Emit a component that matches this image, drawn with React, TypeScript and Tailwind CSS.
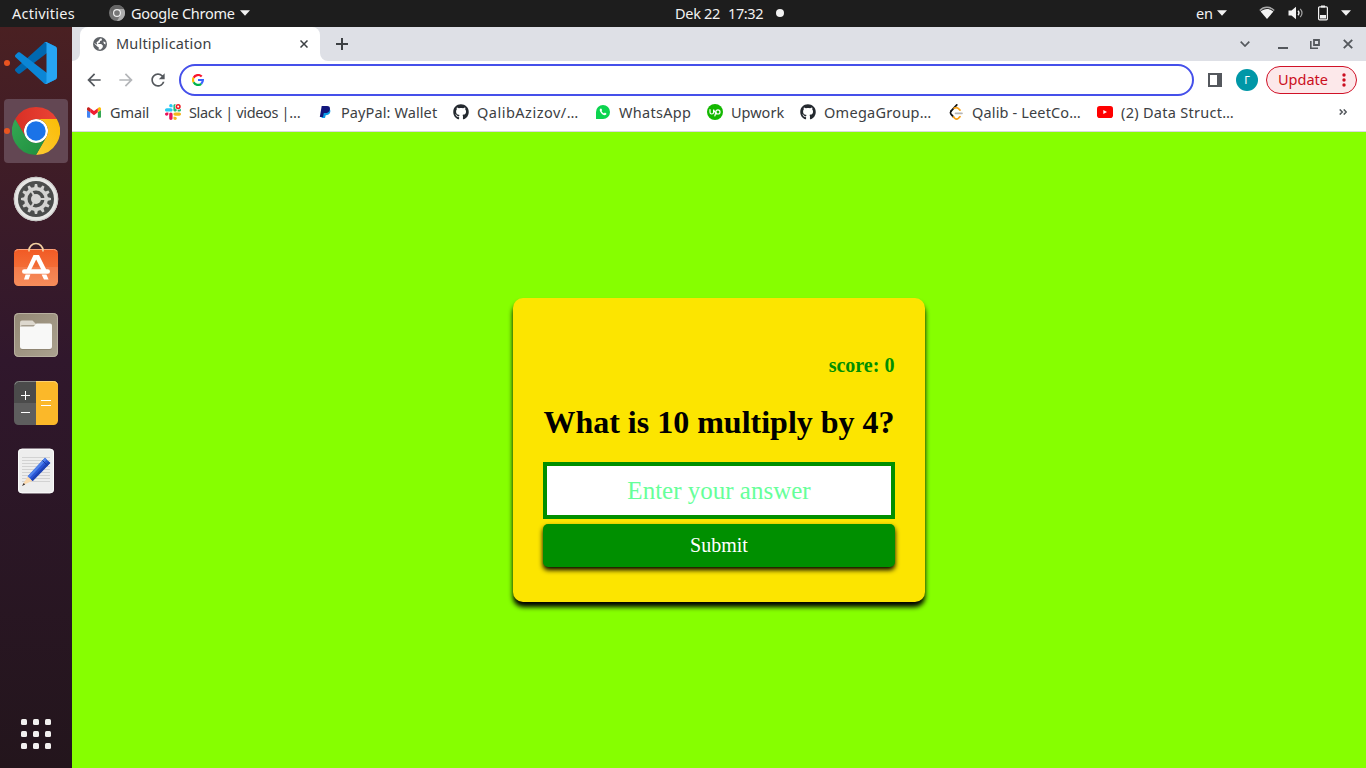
import React from "react";
import { MdArrowBack, MdArrowForward, MdRefresh } from "react-icons/md";
import { FaGithub } from "react-icons/fa";

/* ---------- Desktop top bar ---------- */

function Caret({ className = "" }: { className?: string }) {
  return (
    <svg width="10" height="6" viewBox="0 0 10 6" className={className}>
      <path d="M0 0.3h10L5 5.8z" fill="#f2f2f2" />
    </svg>
  );
}

function GrayChrome() {
  return (
    <svg width="16" height="16" viewBox="0 0 48 48">
      <circle cx="24" cy="24" r="24" fill="#747474" />
      <path d="M24 12H44.8A24 24 0 0 0 3.2 12L13.6 30A12 12 0 0 1 24 12Z" fill="#666" />
      <path d="M34.4 30L24 48A24 24 0 0 0 44.8 12H24A12 12 0 0 1 34.4 30Z" fill="#acacac" />
      <circle cx="24" cy="24" r="12" fill="#f0f0f0" />
      <circle cx="24" cy="24" r="8.5" fill="#777" />
    </svg>
  );
}

function TopBar() {
  return (
    <header className="grid h-[27px] shrink-0 grid-cols-[675px_1fr_170px] items-center bg-[#1d1d1d] pb-px text-[#f2f2f2]">
      <div className="flex items-center">
        <span className="ml-3 w-[97px] tracking-[0.26px]">Activities</span>
        <GrayChrome />
        <span className="ml-[6px] w-[109px] tracking-[-0.25px]">Google Chrome</span>
        <Caret />
      </div>
      <div className="flex items-center">
        <span className="w-[53px] tracking-[-0.3px]">Dek 22</span>
        <span className="w-[48px] tracking-[-0.4px]">17:32</span>
        <span className="size-2 rounded-full bg-[#f2f2f2]" />
      </div>
      <div className="flex items-center">
        <span className="w-[21px] tracking-[-0.3px]">en</span>
        <Caret />
        <svg width="16" height="14" viewBox="0 0 16 14" className="ml-[32px]">
          <path d="M0.8 4.4C4.8 0.2 11.2 0.2 15.2 4.4" fill="none" stroke="#a8a8a8" strokeWidth="1.5" />
          <path d="M1.6 5.6C5.2 2 10.8 2 14.4 5.6L8 13z" fill="#f2f2f2" />
        </svg>
        <svg width="16" height="14" viewBox="0 0 16 14" className="ml-[13px]">
          <path d="M0.5 4.5h3L8 0.8v12.4L3.5 9.5h-3z" fill="#f2f2f2" />
          <path d="M10 4.8c1.2 1.3 1.2 3.1 0 4.4" fill="none" stroke="#f2f2f2" strokeWidth="1.3" />
          <path d="M12.2 2.8c2.4 2.4 2.4 6 0 8.4" fill="none" stroke="#a8a8a8" strokeWidth="1.2" />
        </svg>
        <svg width="10" height="16" viewBox="0 0 10 16" className="ml-[14px]">
          <path d="M3 0.5h4v2H3z" fill="#f2f2f2" />
          <rect x="0.6" y="1.8" width="8.8" height="13" rx="1" fill="none" stroke="#f2f2f2" strokeWidth="1.2" />
          <path d="M2 10h6v3.5H2z" fill="#f2f2f2" />
        </svg>
        <Caret className="ml-[13px]" />
      </div>
    </header>
  );
}

/* ---------- Dock ---------- */

function VSCodeIcon() {
  return (
    <svg width="42" height="42" viewBox="0 0 100 100">
      <path d="M96.4614 10.7962L75.8569 0.875542C73.4719 -0.272773 70.6217 0.211611 68.75 2.08333L1.29858 63.5832C-0.515693 65.2373 -0.513607 68.0937 1.30308 69.7452L6.81272 74.754C8.29793 76.1042 10.5347 76.2036 12.1338 74.9905L93.3609 13.3699C96.086 11.3026 100 13.2462 100 16.6667V16.4275C100 14.0265 98.6246 11.8378 96.4614 10.7962Z" fill="#0068b0" />
      <path d="M96.4614 89.2038L75.8569 99.1245C73.4719 100.273 70.6217 99.7884 68.75 97.9167L1.29858 36.4169C-0.515693 34.7627 -0.513607 31.9063 1.30308 30.2548L6.81272 25.246C8.29793 23.8958 10.5347 23.7964 12.1338 25.0095L93.3609 86.6301C96.086 88.6974 100 86.7538 100 83.3334V83.5726C100 85.9735 98.6246 88.1622 96.4614 89.2038Z" fill="#0b86d6" />
      <path d="M75.8578 99.1263C73.4721 100.274 70.6219 99.7885 68.75 97.9166C71.0564 100.223 75 98.5895 75 95.3278V4.67213C75 1.41039 71.0564 -0.223106 68.75 2.08329C70.6219 0.211402 73.4721 -0.273666 75.8578 0.873633L96.4587 10.7807C98.6234 11.8217 100 14.0112 100 16.4132V83.5871C100 85.9891 98.6234 88.1786 96.4586 89.2196L75.8578 99.1263Z" fill="#27a5f3" />
    </svg>
  );
}

function ChromeIcon() {
  return (
    <svg width="48" height="48" viewBox="0 0 48 48">
      <defs>
        <linearGradient id="cr" x1="0" y1="0" x2="1" y2="0"><stop offset="0" stopColor="#d93025" /><stop offset="1" stopColor="#ea4335" /></linearGradient>
        <linearGradient id="cy" x1="0" y1="1" x2="1" y2="0"><stop offset="0" stopColor="#fcc934" /><stop offset="1" stopColor="#fbbc04" /></linearGradient>
        <linearGradient id="cg" x1="1" y1="1" x2="0" y2="0"><stop offset="0" stopColor="#1e8e3e" /><stop offset="1" stopColor="#34a853" /></linearGradient>
      </defs>
      <circle cx="24" cy="24" r="12" fill="#fff" />
      <path d="M24,12H44.7812a23.9939,23.9939,0,0,0-41.5639.0029L13.6079,30l.0093-.0024A11.9852,11.9852,0,0,1,24,12Z" fill="url(#cr)" />
      <path d="M34.3913,30.0029,24.0007,48A23.994,23.994,0,0,0,44.78,12.0031H23.9989l-.0025.0093A11.985,11.985,0,0,1,34.3913,30.0029Z" fill="url(#cy)" />
      <path d="M13.6086,30.0031,3.218,12.006A23.994,23.994,0,0,0,24.0025,48L34.3931,30.0029l-.0067-.0068a11.9852,11.9852,0,0,1-20.7778.007Z" fill="url(#cg)" />
      <circle cx="24" cy="24" r="9.7" fill="#1a73e8" />
    </svg>
  );
}

const TEETH = [0, 30, 60, 90, 120, 150, 180, 210, 240, 270, 300, 330];

function SettingsIcon() {
  return (
    <svg width="46" height="46" viewBox="0 0 46 46">
      <circle cx="23" cy="23" r="22.3" fill="#e6e6e4" />
      <circle cx="23" cy="23" r="21.7" fill="none" stroke="#c6c6c4" strokeWidth="1" />
      <circle cx="23" cy="23" r="18" fill="#4b4d4c" />
      <g fill="#d2d2d0">
        {TEETH.map((a) => (
          <path key={a} d="M21 12l0.900-4h2.200l0.900 4z" transform={`rotate(${a} 23 23)`} />
        ))}
      </g>
      <circle cx="23" cy="23" r="10.2" fill="none" stroke="#d2d2d0" strokeWidth="3.4" />
      <g stroke="#d2d2d0" strokeWidth="2">
        <path d="M23 23L32 23M23 23L18.500 15.200M23 23L18.500 30.800" />
      </g>
      <circle cx="23" cy="23" r="5" fill="#d6d6d4" />
    </svg>
  );
}

function SoftwareIcon() {
  return (
    <svg width="46" height="46" viewBox="0 0 46 46" className="mb-[6px]">
      <defs>
        <linearGradient id="sw" x1="0" y1="0" x2="0" y2="1"><stop offset="0" stopColor="#f15a24" /><stop offset="1" stopColor="#f58049" /></linearGradient>
      </defs>
      <rect x="1" y="8" width="44" height="37" rx="4.5" fill="url(#sw)" />
      <path d="M1 26h44v14.500a4.500 4.500 0 0 1-4.500 4.500h-35a4.500 4.500 0 0 1-4.500-4.500z" fill="#fff" opacity="0.1" />
      <path d="M2 10.500a3.500 3.500 0 0 1 3.500-2h35a3.500 3.500 0 0 1 3.500 2" fill="none" stroke="#f9a27c" strokeWidth="1" />
      <path d="M16 10.500V9.500a7 7 0 0 1 14 0v1" fill="none" stroke="#f3d0a2" strokeWidth="1.7" />
      <path d="M20.500 14h5.500l7.500 15h-5L23.200 18.500 18 29h-4.500z" fill="#fff" />
      <path d="M12.600 33.500h4.800l-1.800 5h-4.600zM28.600 33.500h4.800l2.200 5H31z" fill="#fff" />
      <rect x="9" y="28.2" width="28" height="4.6" rx="2.3" fill="#fff" />
    </svg>
  );
}

function FilesIcon() {
  return (
    <svg width="46" height="46" viewBox="0 0 46 46">
      <defs>
        <linearGradient id="fl" x1="0" y1="0" x2="1" y2="1"><stop offset="0" stopColor="#938875" /><stop offset="1" stopColor="#aba28f" /></linearGradient>
      </defs>
      <rect x="1" y="1" width="44" height="44" rx="4.5" fill="url(#fl)" />
      <rect x="1.5" y="1.5" width="43" height="43" rx="4" fill="none" stroke="#b8b0a0" />
      <path d="M7 15v-4.500a2 2 0 0 1 2-2h10.500l3.500 3.500v3z" fill="#ddd8ce" />
      <rect x="7" y="13" width="32" height="25" rx="2.5" fill="#827866" opacity="0.6" />
      <path d="M7 14.500h13.500l3-3H37a2 2 0 0 1 2 2V34.500a2.500 2.500 0 0 1-2.500 2.500h-27A2.500 2.500 0 0 1 7 34.500z" fill="#f8f8f7" />
    </svg>
  );
}

function CalculatorIcon() {
  return (
    <svg width="46" height="46" viewBox="0 0 46 46">
      <path d="M5.500 1H23v22H1V5.500A4.500 4.500 0 0 1 5.500 1z" fill="#4b4b4b" />
      <path d="M1 23h22v22H5.500A4.500 4.500 0 0 1 1 40.500z" fill="#5e5e5e" />
      <path d="M23 1h17.500A4.500 4.500 0 0 1 45 5.500v35a4.500 4.500 0 0 1-4.500 4.500H23z" fill="#fbb829" />
      <path d="M2 4.500A4 4 0 0 1 5.500 1.500H23" fill="none" stroke="#858585" />
      <path d="M23 1.500h17.500a4 4 0 0 1 4 3" fill="none" stroke="#fdd16f" />
      <path d="M8 15.500h9M12.500 11v9M8 32.500h9M28 20.500h10M28 25.500h10" stroke="#fff" strokeWidth="1" />
    </svg>
  );
}

function EditorIcon() {
  return (
    <svg width="46" height="46" viewBox="0 0 46 46">
      <rect x="5" y="0.7" width="36" height="44.6" rx="4" fill="#ededed" />
      <rect x="5.5" y="1.2" width="35" height="43.6" rx="3.5" fill="none" stroke="#fafafa" />
      <path d="M9 9.500h28M9 12.500h28M9 15.500h28M9 18.500h28M9 21.500h28M9 24.500h28M9 27.500h28M9 30.500h28M9 33.500h28" stroke="#d2d2d2" strokeWidth="1" />
      <path d="M14.700 28.500L9.200 37.500 19.500 32.800z" fill="#fbd9ae" />
      <path d="M10.700 34.900L9 38l3.200-1.500z" fill="#3d3430" />
      <path d="M14.700 28.300L32 9.700l5.300 5.300L19.700 33z" fill="#2a56d6" />
      <path d="M14.700 28.300L32 9.700l1.800 1.800L16.400 30z" fill="#5082ea" />
      <path d="M18 31.500L35.500 13.200l1.800 1.800L19.700 33z" fill="#1d42b4" />
      <path d="M29.500 12.500l5 5" stroke="#1b3c9e" strokeWidth="1" />
    </svg>
  );
}

const dockItems = [
  { name: "code", icon: <VSCodeIcon />, running: true, active: false },
  { name: "chrome", icon: <ChromeIcon />, running: true, active: true },
  { name: "settings", icon: <SettingsIcon />, running: false, active: false },
  { name: "software", icon: <SoftwareIcon />, running: false, active: false },
  { name: "files", icon: <FilesIcon />, running: false, active: false },
  { name: "calculator", icon: <CalculatorIcon />, running: false, active: false },
  { name: "editor", icon: <EditorIcon />, running: false, active: false },
];

function Dock() {
  return (
    <nav className="flex w-[72px] shrink-0 flex-col items-center gap-1 bg-linear-to-b from-[#4a2022] via-[#30172c] via-45% to-[#23151c] pt-1">
      {dockItems.map((item) => (
        <div
          key={item.name}
          className={
            "relative flex size-16 items-center justify-center rounded-[4px] " + (item.active ? "bg-[#634753]" : "")
          }
        >
          {item.running && <span className="absolute top-[29px] left-0 size-[6px] rounded-full bg-[#e95420]" />}
          {item.icon}
        </div>
      ))}
      <div className="mt-auto mb-[19px] grid grid-cols-3 gap-[6px]">
        {TEETH.slice(0, 9).map((n) => (
          <span key={n} className="size-[6px] rounded-[1.5px] bg-[#f2f0ef]" />
        ))}
      </div>
    </nav>
  );
}

/* ---------- Browser chrome ---------- */

function Globe() {
  return (
    <svg width="14" height="14" viewBox="0 0 14 14">
      <circle cx="7" cy="7" r="7" fill="#5f6368" />
      <path d="M7.200 1.500L9 1.700 8.700 3.500 7 4 7 5.500 5.200 6.100 5.500 7H8.300L9.300 8.200 10 8.500 9.600 10.500 7.800 12.500 5.600 12.600 5.800 10.400 4.300 9.500 1.500 6.800 1.600 6 3.400 7.500 4.300 7.200 3.500 5.200 5.300 4z" fill="#fff" />
      <path d="M10.200 4.500l2.100 0.400 0.300 2.600-1.600-0.800z" fill="#fff" />
    </svg>
  );
}

function TabStrip() {
  return (
    <div className="flex h-[34px] bg-[#dee0e6]">
      <svg width="8" height="8" viewBox="0 0 8 8" className="self-end">
        <path d="M8 0v8H0a8 8 0 0 0 8-8z" fill="#fff" />
      </svg>
      <div className="flex w-60 items-center rounded-t-lg bg-white pl-[13px] text-[#3c4043]">
        <Globe />
        <span className="mb-[2px] ml-[9px] w-[184px] tracking-[0.18px]">Multiplication</span>
        <svg width="8" height="8" viewBox="0 0 8 8">
          <path d="M0.500 0.500l7 7M7.500 0.500l-7 7" stroke="#3c4043" strokeWidth="1.5" />
        </svg>
      </div>
      <svg width="8" height="8" viewBox="0 0 8 8" className="self-end">
        <path d="M0 0v8h8a8 8 0 0 1-8-8z" fill="#fff" />
      </svg>
      <svg width="12" height="12" viewBox="0 0 12 12" className="ml-2 self-center">
        <path d="M0 6h12M6 0v12" stroke="#3c4043" strokeWidth="2" />
      </svg>
      <div className="ml-auto flex items-center pr-[13px]">
        <svg width="10" height="6" viewBox="0 0 10 6">
          <path d="M0.700 0.700L5 5l4.300-4.300" fill="none" stroke="#54585d" strokeWidth="1.7" />
        </svg>
        <svg width="10" height="10" viewBox="0 0 10 10" className="ml-[28px]">
          <path d="M0 9h10" stroke="#54585d" strokeWidth="2" />
        </svg>
        <svg width="10" height="10" viewBox="0 0 10 10" className="ml-[22px]">
          <path d="M4 1h5v5H4z" fill="none" stroke="#54585d" strokeWidth="1.8" />
          <path d="M0.800 2v7.200H8" fill="none" stroke="#54585d" strokeWidth="1.6" />
        </svg>
        <svg width="10" height="10" viewBox="0 0 10 10" className="ml-[23px]">
          <path d="M0.800 0.800l8.400 8.400M9.200 0.800L0.800 9.200" stroke="#54585d" strokeWidth="1.9" />
        </svg>
      </div>
    </div>
  );
}

function GoogleG() {
  return (
    <svg width="12" height="12" viewBox="0 0 12 12" fill="none" strokeWidth="2.2">
      <path d="M9.700 2.600A5 5 0 0 0 1.600 3.700" stroke="#f9152d" />
      <path d="M1.600 3.700A5 5 0 0 0 1.600 8.300" stroke="#fdbd00" />
      <path d="M1.600 8.300A5 5 0 0 0 9.200 9.800" stroke="#00b34a" />
      <path d="M9.200 9.800A5 5 0 0 0 10.900 6H6" stroke="#3b63ff" />
    </svg>
  );
}

function Toolbar() {
  return (
    <div className="flex h-[37px] items-center pr-[9px] pl-[12px]">
      <MdArrowBack className="size-5 text-[#54585d]" />
      <MdArrowForward className="ml-[12px] size-5 text-[#b4b6b9]" />
      <MdRefresh className="ml-[12px] size-5 text-[#54585d]" />
      <div className="ml-[11px] flex h-8 w-[1015px] items-center rounded-full border-2 border-[#4550ea] pl-[11px]">
        <GoogleG />
      </div>
      <svg width="14" height="14" viewBox="0 0 14 14" className="ml-[14px]">
        <path d="M1 1h12v12H1z" fill="#fff" stroke="#54585d" strokeWidth="2" />
        <path d="M9 0h5v14H9z" fill="#54585d" />
      </svg>
      <span className="ml-[14px] flex size-[22px] items-center justify-center rounded-full bg-[#0097a7] text-[11px] text-white">Г</span>
      <button className="ml-2 flex h-[28px] w-[91px] items-center rounded-full border border-[#d01127] bg-[#fce8ea] pl-[11px] text-[#cb0e20]">
        <span className="mb-px w-[54px] text-left">Update</span>
        <svg width="4" height="14" viewBox="0 0 4 14" className="ml-[10px]">
          <circle cx="2" cy="2" r="1.7" fill="#cb0e20" />
          <circle cx="2" cy="7" r="1.7" fill="#cb0e20" />
          <circle cx="2" cy="12" r="1.7" fill="#cb0e20" />
        </svg>
      </button>
    </div>
  );
}

function GmailIcon() {
  return (
    <svg width="14" height="11" viewBox="52 42 88 66">
      <path d="M58 108h14V74L52 59v43c0 3.320 2.690 6 6 6" fill="#4285f4" />
      <path d="M120 108h14c3.320 0 6-2.690 6-6V59l-20 15" fill="#34a853" />
      <path d="M120 48v26l20-15v-8c0-7.420-8.470-11.650-14.400-7.200" fill="#fbbc04" />
      <path d="M72 74V48l24 18 24-18v26L96 92" fill="#f01c30" />
      <path d="M52 51v8l20 15V48l-5.600-4.200c-5.940-4.450-14.400-.22-14.400 7.200" fill="#c5221f" />
    </svg>
  );
}

function SlackIcon() {
  return (
    <svg width="16" height="16" viewBox="0 0 122.8 122.8">
      <path d="M25.8 77.6c0 7.1-5.8 12.9-12.9 12.9S0 84.7 0 77.6s5.8-12.9 12.9-12.9h12.9v12.9zm6.5 0c0-7.1 5.8-12.9 12.9-12.9s12.9 5.8 12.9 12.9v32.3c0 7.1-5.8 12.9-12.9 12.9s-12.9-5.8-12.9-12.9V77.6z" fill="#e8125a" />
      <path d="M45.2 25.8c-7.1 0-12.9-5.8-12.9-12.9S38.1 0 45.2 0s12.9 5.8 12.9 12.9v12.9H45.2zm0 6.5c7.1 0 12.9 5.8 12.9 12.9s-5.8 12.9-12.9 12.9H12.9C5.8 58.1 0 52.3 0 45.2s5.8-12.9 12.9-12.9h32.3z" fill="#29c8f4" />
      <path d="M97 45.2c0-7.1 5.8-12.9 12.9-12.9s12.9 5.8 12.9 12.9-5.8 12.9-12.9 12.9H97V45.2zm-6.5 0c0 7.1-5.8 12.9-12.9 12.9s-12.9-5.8-12.9-12.9V12.9C64.7 5.8 70.5 0 77.6 0s12.9 5.8 12.9 12.9v32.3z" fill="#20b97a" />
      <path d="M77.6 97c7.1 0 12.9 5.8 12.9 12.9s-5.8 12.9-12.9 12.9-12.9-5.8-12.9-12.9V97h12.9zm0-6.5c-7.1 0-12.9-5.8-12.9-12.9s5.8-12.9 12.9-12.9h32.3c7.1 0 12.9 5.8 12.9 12.9s-5.8 12.9-12.9 12.9H77.6z" fill="#f3b41c" />
      <circle cx="101" cy="20" r="25" fill="#fff" />
      <circle cx="101" cy="20" r="14" fill="#fff" stroke="#ee1c25" strokeWidth="12" />
    </svg>
  );
}

function PayPalIcon() {
  return (
    <svg width="16" height="16" viewBox="0 0 16 16">
      <path d="M6 5h6.500c1 1 1.100 2.200 0.600 3.600-0.600 1.900-2.200 2.600-4.400 2.600L8 14H4.500z" fill="#0a9be6" />
      <path d="M4.700 2H10c2.200 0 3.400 1.200 2.900 3.400C12.400 8.200 10.600 9 8.300 9H6.800L6 13H2.800z" fill="#12167c" />
    </svg>
  );
}

function WhatsAppIcon() {
  return (
    <span className="flex size-[14px] items-center justify-center rounded-full rounded-bl-[3px] bg-[#0cd44f]">
      <svg width="14" height="14" viewBox="0 0 14 14">
        <path d="M4.600 3.500c-1.400 0.800-1.100 2.700 0.500 4.400 1.700 1.900 3.600 2.800 4.700 1.900 0.700-0.600 0.700-1.200 0.500-1.400l-1.400-0.800-0.900 0.900c-1.200-0.500-2-1.300-2.500-2.400l0.700-0.800-0.700-1.600z" fill="#fff" />
      </svg>
    </span>
  );
}

function UpworkIcon() {
  return (
    <svg width="16" height="16" viewBox="0 0 16 16">
      <circle cx="8" cy="8" r="8" fill="#14b800" />
      <g fill="none" stroke="#fff" strokeWidth="1.2" strokeLinecap="round">
        <path d="M3 5.600v2.600a1.800 1.800 0 0 0 3.600 0V5.600C7.300 7.600 8.300 9 9.600 9.800" />
        <circle cx="10.900" cy="7.900" r="2.100" />
        <path d="M8.800 8L7.900 11.800" />
      </g>
    </svg>
  );
}

function LeetCodeIcon() {
  return (
    <svg width="16" height="16" viewBox="0 0 16 16" fill="none" strokeWidth="1.7" strokeLinecap="round">
      <path d="M8.800 0.900L3 7.200" stroke="#111" />
      <path d="M3 7.200c-0.800 1-0.800 1.900 0 2.900l2.400 2.800" stroke="#111" />
      <path d="M5.400 12.900l1.500 1.500c1.100 0.900 2.300 0.900 3.400 0l1.700-1.700" stroke="#f9a31a" />
      <path d="M6 4.200c1.700-0.900 3-0.800 4.200 0.200l1.800 1.800" stroke="#f9a31a" />
      <path d="M7.500 9.300h6.500" stroke="#b5b5b5" />
    </svg>
  );
}

function YouTubeIcon() {
  return (
    <svg width="16" height="12" viewBox="0 0 16 12">
      <rect width="16" height="12" rx="2.8" fill="#f00" />
      <path d="M6.300 3.900L10 6 6.300 8.100z" fill="#fff" />
    </svg>
  );
}

const bookmarks = [
  { label: "Gmail", icon: <GmailIcon />, box: "w-[79px] tracking-[-0.1px]" },
  { label: "Slack | videos |…", icon: <SlackIcon />, box: "w-[152px] tracking-[-0.35px]" },
  { label: "PayPal: Wallet", icon: <PayPalIcon />, box: "w-[136px] tracking-[0.1px]" },
  { label: "QalibAzizov/…", icon: <FaGithub className="size-4 text-[#24292f]" />, box: "w-[142px] tracking-[0.5px]" },
  { label: "WhatsApp", icon: <WhatsAppIcon />, box: "w-[112px] tracking-[0.3px]" },
  { label: "Upwork", icon: <UpworkIcon />, box: "w-[93px]" },
  { label: "OmegaGroup…", icon: <FaGithub className="size-4 text-[#24292f]" />, box: "w-[148px] tracking-[0.28px]" },
  { label: "Qalib - LeetCo…", icon: <LeetCodeIcon />, box: "w-[149px] tracking-[0.15px]" },
  { label: "(2) Data Struct…", icon: <YouTubeIcon />, box: "w-[150px] tracking-[0.28px]" },
];

function BookmarksBar() {
  return (
    <div className="flex h-[34px] items-center border-b border-[#d9dadd] pb-[5px] pl-[14px] text-[#3c4043]">
      {bookmarks.map((b) => (
        <a key={b.label} className={"flex shrink-0 items-center gap-2 whitespace-nowrap " + b.box}>
          <span className="flex w-4 shrink-0 justify-center">{b.icon}</span>
          <span className="mb-px">{b.label}</span>
        </a>
      ))}
      <svg width="8" height="6" viewBox="0 0 8 6" className="mr-[19px] ml-auto">
        <path d="M0.700 0.400L3.300 3 0.700 5.600M4.700 0.400L7.300 3 4.700 5.600" fill="none" stroke="#54585d" strokeWidth="1.5" />
      </svg>
    </div>
  );
}

/* ---------- Page ---------- */

function QuizPage() {
  return (
    <main className="flex flex-1 items-center justify-center bg-[#86ff00] font-['Liberation_Serif',serif]">
      <form
        className="flex h-[304px] w-[412px] flex-col rounded-[10px] bg-[#fce500] px-[30px] pt-[56px] shadow-[0_5px_5px_#000]"
        onSubmit={(e) => e.preventDefault()}
      >
        <p className="pr-[0.6px] text-right text-[20px] leading-[23px] font-bold text-[#008f00]">score: 0</p>
        <h1 className="mt-[27px] text-center text-[32px] leading-[37px] font-bold whitespace-nowrap text-black">
          What is 10 multiply by 4?
        </h1>
        <input
          type="text"
          placeholder="Enter your answer"
          className="mt-[21px] h-[57px] w-full shrink-0 border-4 border-[#008f00] bg-white text-center text-[25px] text-black outline-none placeholder:text-[#66ff99]"
        />
        <button className="mt-[5px] h-[43px] w-full shrink-0 rounded-[5px] bg-[#008f00] pb-[2px] text-[20px] text-white shadow-[0_3px_5px_#000]">
          Submit
        </button>
      </form>
    </main>
  );
}

export default function App() {
  return (
    <div className="flex h-[768px] w-[1366px] flex-col overflow-hidden font-['Noto_Sans',sans-serif] text-[14.5px] leading-[20px]">
      <TopBar />
      <div className="flex min-h-0 flex-1">
        <Dock />
        <div className="flex flex-1 flex-col bg-white">
          <TabStrip />
          <Toolbar />
          <BookmarksBar />
          <QuizPage />
        </div>
      </div>
    </div>
  );
}
